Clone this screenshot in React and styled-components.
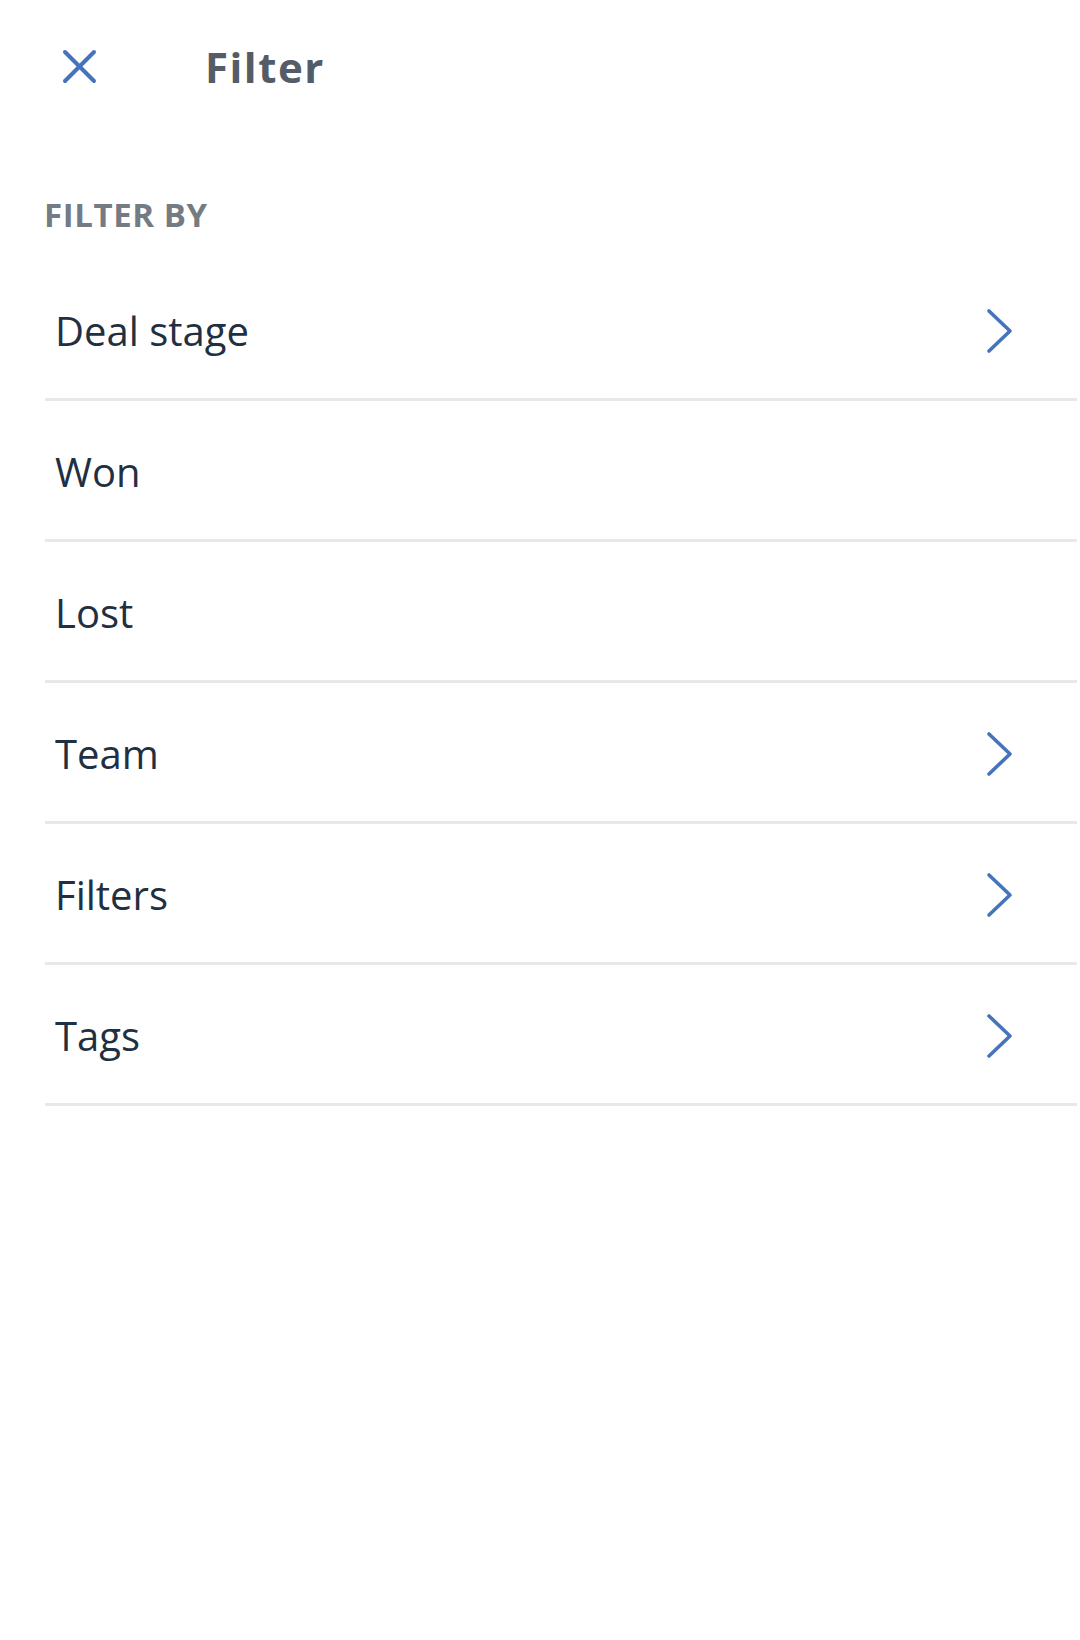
import styled, { createGlobalStyle } from 'styled-components';

const colors = {
  blue: '#4674bc',
  title: '#545d67',
  label: '#747b83',
  text: '#1f3042',
  divider: '#e8e8ea'
};

const GlobalStyle = createGlobalStyle`
  html, body {
    margin: 0;
    padding: 0;
    background: #fff;
  }
  body {
    font-family: "Open Sans", "Noto Sans", sans-serif;
  }
`;

const items = [
  { label: 'Deal stage', more: true },
  { label: 'Won', more: false },
  { label: 'Lost', more: false },
  { label: 'Team', more: true },
  { label: 'Filters', more: true },
  { label: 'Tags', more: true }
];

const CloseIcon = () => (
  <svg width="37" height="37" viewBox="0 0 37 37">
    <g stroke={colors.blue} strokeWidth="4" strokeLinecap="round" fill="none">
      <line x1="4" y1="4" x2="33" y2="33" />
      <line x1="33" y1="4" x2="4" y2="33" />
    </g>
  </svg>
);

const Chevron = () => (
  <svg width="28" height="46" viewBox="0 0 28 46">
    <polyline
      points="4,3 25,23 4,43"
      fill="none"
      stroke={colors.blue}
      strokeWidth="3.6"
      strokeLinecap="round"
      strokeLinejoin="round"
    />
  </svg>
);

export default () => (
  <Screen>
    <GlobalStyle />
    <Header>
      <CloseButton aria-label="Close">
        <CloseIcon />
      </CloseButton>
      <Title>Filter</Title>
    </Header>
    <SectionLabel>FILTER BY</SectionLabel>
    <List>
      {items.map(item => (
        <Row key={item.label}>
          <RowLabel>{item.label}</RowLabel>
          {item.more && <Chevron />}
        </Row>
      ))}
    </List>
  </Screen>
);

const Screen = styled.div`
  width: 1080px;
  min-height: 1640px;
  background: #fff;
`;

const Header = styled.div`
  display: flex;
  align-items: center;
  height: 133px;
  padding-left: 61px;
  gap: 107px;
`;

const CloseButton = styled.div`
  display: flex;
  width: 37px;
  height: 37px;
  cursor: pointer;
`;

const Title = styled.h1`
  margin: 0;
  font-size: 42px;
  font-weight: 700;
  letter-spacing: 1.5px;
  color: ${colors.title};
`;

const SectionLabel = styled.div`
  margin: 59px 0 0 44px;
  font-size: 33px;
  font-weight: 700;
  color: ${colors.label};
  letter-spacing: 0.6px;
`;

const List = styled.div`
  margin: 23px 3px 0 45px;
`;

const Row = styled.div`
  box-sizing: border-box;
  display: flex;
  align-items: center;
  justify-content: space-between;
  height: 141px;
  padding: 3px 64px 0 10px;
  border-bottom: 3px solid ${colors.divider};
`;

const RowLabel = styled.span`
  font-size: 40px;
  color: ${colors.text};
`;
